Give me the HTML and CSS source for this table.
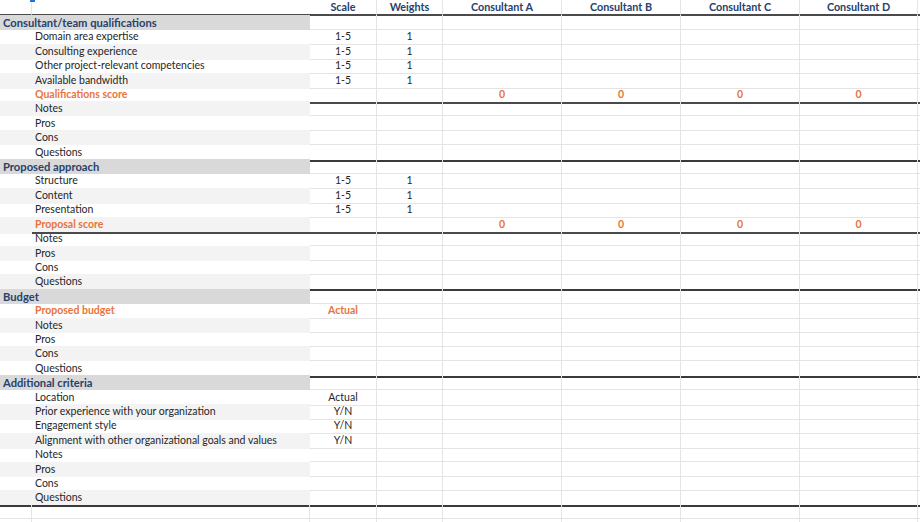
FILE: index.html
```html
<!DOCTYPE html>
<html>
<head>
<meta charset="utf-8">
<link rel="stylesheet" href="styles.css">
</head>
<body>
<div class="sheet">
  <div class="cursor"></div>

  <div class="row head"><div class="c a"></div><div class="c b"></div><div class="c">Scale</div><div class="c">Weights</div><div class="c">Consultant A</div><div class="c">Consultant B</div><div class="c">Consultant C</div><div class="c">Consultant D</div><div class="c x"></div></div>

  <div class="row sec"><div class="c t">Consultant/team qualifications</div><div class="c"></div><div class="c"></div><div class="c"></div><div class="c"></div><div class="c"></div><div class="c"></div><div class="c x"></div></div>
  <div class="row"><div class="c a"></div><div class="c b">Domain area expertise</div><div class="c n">1-5</div><div class="c n">1</div><div class="c"></div><div class="c"></div><div class="c"></div><div class="c"></div><div class="c x"></div></div>
  <div class="row alt"><div class="c a"></div><div class="c b">Consulting experience</div><div class="c n">1-5</div><div class="c n">1</div><div class="c"></div><div class="c"></div><div class="c"></div><div class="c"></div><div class="c x"></div></div>
  <div class="row"><div class="c a"></div><div class="c b">Other project-relevant competencies</div><div class="c n">1-5</div><div class="c n">1</div><div class="c"></div><div class="c"></div><div class="c"></div><div class="c"></div><div class="c x"></div></div>
  <div class="row alt"><div class="c a"></div><div class="c b">Available bandwidth</div><div class="c n">1-5</div><div class="c n">1</div><div class="c"></div><div class="c"></div><div class="c"></div><div class="c"></div><div class="c x"></div></div>
  <div class="row score"><div class="c a"></div><div class="c b or">Qualifications score</div><div class="c"></div><div class="c"></div><div class="c n or">0</div><div class="c n or">0</div><div class="c n or">0</div><div class="c n or">0</div><div class="c x"></div></div>
  <div class="row alt"><div class="c a"></div><div class="c b">Notes</div><div class="c"></div><div class="c"></div><div class="c"></div><div class="c"></div><div class="c"></div><div class="c"></div><div class="c x"></div></div>
  <div class="row"><div class="c a"></div><div class="c b">Pros</div><div class="c"></div><div class="c"></div><div class="c"></div><div class="c"></div><div class="c"></div><div class="c"></div><div class="c x"></div></div>
  <div class="row alt"><div class="c a"></div><div class="c b">Cons</div><div class="c"></div><div class="c"></div><div class="c"></div><div class="c"></div><div class="c"></div><div class="c"></div><div class="c x"></div></div>
  <div class="row end"><div class="c a"></div><div class="c b">Questions</div><div class="c"></div><div class="c"></div><div class="c"></div><div class="c"></div><div class="c"></div><div class="c"></div><div class="c x"></div></div>

  <div class="row sec"><div class="c t">Proposed approach</div><div class="c"></div><div class="c"></div><div class="c"></div><div class="c"></div><div class="c"></div><div class="c"></div><div class="c x"></div></div>
  <div class="row"><div class="c a"></div><div class="c b">Structure</div><div class="c n">1-5</div><div class="c n">1</div><div class="c"></div><div class="c"></div><div class="c"></div><div class="c"></div><div class="c x"></div></div>
  <div class="row alt"><div class="c a"></div><div class="c b">Content</div><div class="c n">1-5</div><div class="c n">1</div><div class="c"></div><div class="c"></div><div class="c"></div><div class="c"></div><div class="c x"></div></div>
  <div class="row"><div class="c a"></div><div class="c b">Presentation</div><div class="c n">1-5</div><div class="c n">1</div><div class="c"></div><div class="c"></div><div class="c"></div><div class="c"></div><div class="c x"></div></div>
  <div class="row alt score"><div class="c a"></div><div class="c b or">Proposal score</div><div class="c"></div><div class="c"></div><div class="c n or">0</div><div class="c n or">0</div><div class="c n or">0</div><div class="c n or">0</div><div class="c x"></div></div>
  <div class="row"><div class="c a"></div><div class="c b">Notes</div><div class="c"></div><div class="c"></div><div class="c"></div><div class="c"></div><div class="c"></div><div class="c"></div><div class="c x"></div></div>
  <div class="row alt"><div class="c a"></div><div class="c b">Pros</div><div class="c"></div><div class="c"></div><div class="c"></div><div class="c"></div><div class="c"></div><div class="c"></div><div class="c x"></div></div>
  <div class="row"><div class="c a"></div><div class="c b">Cons</div><div class="c"></div><div class="c"></div><div class="c"></div><div class="c"></div><div class="c"></div><div class="c"></div><div class="c x"></div></div>
  <div class="row alt end"><div class="c a"></div><div class="c b">Questions</div><div class="c"></div><div class="c"></div><div class="c"></div><div class="c"></div><div class="c"></div><div class="c"></div><div class="c x"></div></div>

  <div class="row sec"><div class="c t">Budget</div><div class="c"></div><div class="c"></div><div class="c"></div><div class="c"></div><div class="c"></div><div class="c"></div><div class="c x"></div></div>
  <div class="row"><div class="c a"></div><div class="c b or">Proposed budget</div><div class="c n or">Actual</div><div class="c"></div><div class="c"></div><div class="c"></div><div class="c"></div><div class="c"></div><div class="c x"></div></div>
  <div class="row alt"><div class="c a"></div><div class="c b">Notes</div><div class="c"></div><div class="c"></div><div class="c"></div><div class="c"></div><div class="c"></div><div class="c"></div><div class="c x"></div></div>
  <div class="row"><div class="c a"></div><div class="c b">Pros</div><div class="c"></div><div class="c"></div><div class="c"></div><div class="c"></div><div class="c"></div><div class="c"></div><div class="c x"></div></div>
  <div class="row alt"><div class="c a"></div><div class="c b">Cons</div><div class="c"></div><div class="c"></div><div class="c"></div><div class="c"></div><div class="c"></div><div class="c"></div><div class="c x"></div></div>
  <div class="row end"><div class="c a"></div><div class="c b">Questions</div><div class="c"></div><div class="c"></div><div class="c"></div><div class="c"></div><div class="c"></div><div class="c"></div><div class="c x"></div></div>

  <div class="row sec"><div class="c t">Additional criteria</div><div class="c"></div><div class="c"></div><div class="c"></div><div class="c"></div><div class="c"></div><div class="c"></div><div class="c x"></div></div>
  <div class="row"><div class="c a"></div><div class="c b">Location</div><div class="c n">Actual</div><div class="c"></div><div class="c"></div><div class="c"></div><div class="c"></div><div class="c"></div><div class="c x"></div></div>
  <div class="row alt"><div class="c a"></div><div class="c b">Prior experience with your organization</div><div class="c n">Y/N</div><div class="c"></div><div class="c"></div><div class="c"></div><div class="c"></div><div class="c"></div><div class="c x"></div></div>
  <div class="row"><div class="c a"></div><div class="c b">Engagement style</div><div class="c n">Y/N</div><div class="c"></div><div class="c"></div><div class="c"></div><div class="c"></div><div class="c"></div><div class="c x"></div></div>
  <div class="row alt"><div class="c a"></div><div class="c b">Alignment with other organizational goals and values</div><div class="c n">Y/N</div><div class="c"></div><div class="c"></div><div class="c"></div><div class="c"></div><div class="c"></div><div class="c x"></div></div>
  <div class="row"><div class="c a"></div><div class="c b">Notes</div><div class="c"></div><div class="c"></div><div class="c"></div><div class="c"></div><div class="c"></div><div class="c"></div><div class="c x"></div></div>
  <div class="row alt"><div class="c a"></div><div class="c b">Pros</div><div class="c"></div><div class="c"></div><div class="c"></div><div class="c"></div><div class="c"></div><div class="c"></div><div class="c x"></div></div>
  <div class="row"><div class="c a"></div><div class="c b">Cons</div><div class="c"></div><div class="c"></div><div class="c"></div><div class="c"></div><div class="c"></div><div class="c"></div><div class="c x"></div></div>
  <div class="row alt end"><div class="c a"></div><div class="c b">Questions</div><div class="c"></div><div class="c"></div><div class="c"></div><div class="c"></div><div class="c"></div><div class="c"></div><div class="c x"></div></div>

  <div class="row blank"><div class="c a"></div><div class="c b"></div><div class="c"></div><div class="c"></div><div class="c"></div><div class="c"></div><div class="c"></div><div class="c"></div><div class="c x"></div></div>
  <div class="row blank"><div class="c a"></div><div class="c b"></div><div class="c"></div><div class="c"></div><div class="c"></div><div class="c"></div><div class="c"></div><div class="c"></div><div class="c x"></div></div>
</div>
</body>
</html>
```

FILE: styles.css
```css
html, body {
  margin: 0;
  padding: 0;
  background: #ffffff;
}

body {
  font-family: Lato, "Open Sans", "Liberation Sans", sans-serif;
  font-size: 10.5px;
  color: #262626;
  overflow: hidden;
}

.sheet {
  position: relative;
  width: 920px;
}

.cursor {
  position: absolute;
  left: 30px;
  top: 0;
  width: 5px;
  height: 2px;
  background: #1a73e8;
}

.row {
  display: grid;
  grid-template-columns: 32px 278px 67px 66px 119px 119px 119px 118px 1fr;
  height: 14.42px;
}

.c {
  box-sizing: border-box;
  border-right: 1px solid #e4e4e4;
  border-bottom: 1px solid #e4e4e4;
  line-height: 15px;
  white-space: nowrap;
  min-width: 0;
}

.a,
.b {
  border-right: 0;
  border-bottom: 0;
}

.b {
  padding-left: 3px;
}

.x {
  border-right: 0;
}

.n {
  text-align: center;
}

.alt .a,
.alt .b {
  background: #f3f3f3;
}

.head {
  height: 15px;
}

.head .c {
  border-bottom: 2px solid #4a4a4a;
  font-weight: 700;
  font-size: 10.8px;
  line-height: 14px;
  color: #27416b;
  text-align: center;
}

.head .a {
  border-right: 1px solid #e4e4e4;
}

.sec .t {
  grid-column: 1 / 3;
  background: #d9d9d9;
  border-right: 0;
  border-bottom: 0;
  font-weight: 700;
  font-size: 11.2px;
  color: #27416b;
  padding-left: 3px;
}

.score .c:not(.a) {
  border-bottom: 2px solid #4a4a4a;
}

.end .c {
  border-bottom: 2px solid #3a3a3a;
}

.or {
  color: #e8743b;
  font-weight: 700;
}

.blank .c {
  border-bottom: 1px solid #e4e4e4;
  border-right: 1px solid #e4e4e4;
}

.blank .x {
  border-right: 0;
}
```
